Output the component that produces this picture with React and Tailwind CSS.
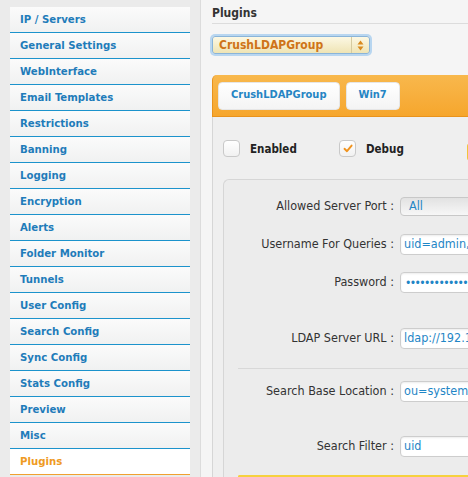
import React from 'react';

const menu = [
  'IP / Servers', 'General Settings', 'WebInterface', 'Email Templates', 'Restrictions',
  'Banning', 'Logging', 'Encryption', 'Alerts', 'Folder Monitor', 'Tunnels', 'User Config',
  'Search Config', 'Sync Config', 'Stats Config', 'Preview', 'Misc', 'Plugins',
];

const font = "font-['DejaVu_Sans_Condensed','DejaVu_Sans',sans-serif]";

function Field({ label, children, className }) {
  return (
    <div className={'flex items-center shrink-0 ' + (className || '')}>
      <div className="w-[157px] shrink-0 text-right text-[12.5px] text-[#333] pr-[1px] whitespace-nowrap">{label}</div>
      <div className="ml-[5px] shrink-0">{children}</div>
    </div>
  );
}

function TextBox({ children }) {
  return (
    <div className="w-[200px] h-[21px] flex items-center px-[3px] bg-white border border-[#cdcdcd] rounded-[4px] shadow-[inset_0_1px_2px_rgba(0,0,0,0.08)] text-[12.5px] text-[#1f86c6] whitespace-nowrap overflow-hidden">
      {children}
    </div>
  );
}

export default function App() {
  return (
    <div className={'w-[468px] h-[477px] overflow-hidden bg-[#ebebeb] flex ' + font}>
      {/* sidebar */}
      <div className="ml-[10px] mt-[7px] w-[180px] shrink-0 flex flex-col">
        {menu.map((item) => {
          const active = item === 'Plugins';
          return (
            <div
              key={item}
              className={
                'h-[26px] shrink-0 flex items-center pl-[10px] pt-[1px] border-b bg-linear-to-b from-[#fbfbfb] to-[#f0f1f1] text-[11.3px] font-bold ' +
                (active ? 'border-[#f0a030] text-[#ef9a22] from-white to-white' : 'border-[#1c93cc] text-[#1f7cba]')
              }
            >
              {item}
            </div>
          );
        })}
      </div>

      {/* main */}
      <div className="ml-[10px] flex-1 min-w-0 overflow-hidden border-l border-[#dcdcdc] bg-[#f5f5f5] pl-[11px] flex flex-col">
        <div className="pt-[6px] pb-[3px] h-[24px] border-b border-[#dcdcdc] text-[12px] font-bold text-[#333] leading-[14px]">
          Plugins
        </div>

        <div className="mt-[12px] w-[158px] h-[18px] shrink-0 flex items-center rounded-[3px] border border-[#8ab4d8] ring-2 ring-[#b8d6f0] bg-linear-to-b from-[#fcf8e4] to-[#efe4b4]">
          <div className="flex-1 pl-[6px] text-[12px] font-bold text-[#cf7418]">CrushLDAPGroup</div>
          <div className="w-[18px] h-full border-l border-[#d6cba0] flex items-center justify-center">
            <svg width="7" height="11" viewBox="0 0 7 11">
              <path d="M3.5 0.5 L6.5 4.5 L0.5 4.5 Z" fill="#d98a1e" />
              <path d="M3.5 10.5 L6.5 6.5 L0.5 6.5 Z" fill="#d98a1e" />
            </svg>
          </div>
        </div>

        {/* tab bar */}
        <div className="mt-[21px] h-[42px] shrink-0 w-[300px] rounded-tl-[5px] border-l border-b border-[#e9931c] bg-linear-to-b from-[#f8b84c] to-[#f6a62c] flex items-center pl-[5px] gap-[6px]">
          <div className="h-[28px] px-[12px] flex items-center bg-linear-to-b from-white to-[#f4f4f4] border border-[#e6e6e6] rounded-[4px] text-[11px] font-bold text-[#2585c4]">
            CrushLDAPGroup
          </div>
          <div className="h-[28px] px-[12px] flex items-center bg-linear-to-b from-white to-[#f4f4f4] border border-[#e6e6e6] rounded-[4px] text-[11px] font-bold text-[#2585c4]">
            Win7
          </div>
        </div>

        {/* content */}
        <div className="flex-1 border-l border-[#d6d6d6] bg-[#efefef] pl-[10px] pt-[23px] flex flex-col">
          <div className="flex items-center shrink-0 h-[17px]">
            <div className="w-[116px] shrink-0 flex items-center">
              <div className="w-[17px] h-[17px] rounded-[4px] border border-[#c9c9c9] bg-linear-to-b from-white to-[#f1f1f1]" />
              <span className="ml-[10px] mt-[2px] text-[11.5px] font-bold text-[#222]">Enabled</span>
            </div>
            <div className="w-[128px] shrink-0 flex items-center">
              <div className="w-[17px] h-[17px] rounded-[4px] border border-[#c9c9c9] bg-linear-to-b from-white to-[#f1f1f1] flex items-center justify-center">
                <svg width="10" height="9" viewBox="0 0 10 9">
                  <path d="M1.5 4.8 L4 7.2 L8.6 1.6" stroke="#f0931e" strokeWidth="1.9" fill="none" strokeLinecap="round" strokeLinejoin="round" />
                </svg>
              </div>
              <span className="ml-[10px] mt-[2px] text-[11.5px] font-bold text-[#222]">Debug</span>
            </div>
            <div className="w-[40px] h-[18px] shrink-0 mt-[6px] rounded-[3px] border border-[#f2c43a] bg-[#fbd04a]" />
          </div>

          <div className="mt-[22px] flex-1 w-[300px] rounded-tl-[6px] border-t border-l border-[#d6d6d6] bg-[#ececec] pl-[14px] pt-[17px] flex flex-col">
            <Field label="Allowed Server Port :">
              <div className="w-[200px] h-[19px] flex items-center pl-[8px] border border-[#c8c8c8] rounded-[4px] bg-linear-to-b from-[#e2e2e2] to-[#f7f7f7] text-[12.5px] text-[#1f86c6]">
                All
              </div>
            </Field>
            <Field label="Username For Queries :" className="mt-[18px]">
              <TextBox>uid=admin, ou=system</TextBox>
            </Field>
            <Field label="Password :" className="mt-[17px]">
              <TextBox>
                <span className="text-[12px] tracking-[-1.6px] pl-[1px]">••••••••••••••••••••••</span>
              </TextBox>
            </Field>
            <Field label="LDAP Server URL :" className="mt-[35px]">
              <TextBox>ldap://192.168.1.10:389</TextBox>
            </Field>
            <div className="mt-[19px] border-t border-[#d8d8d8] shrink-0" />
            <Field label="Search Base Location :" className="mt-[12px]">
              <TextBox>ou=system</TextBox>
            </Field>
            <Field label="Search Filter :" className="mt-[34px]">
              <TextBox>uid</TextBox>
            </Field>
            <div className="mt-[18px] flex-1 rounded-tl-[6px] border-t-2 border-l-2 border-[#f6d13e] bg-[#fdf4c4]" />
          </div>
        </div>
      </div>
    </div>
  );
}
